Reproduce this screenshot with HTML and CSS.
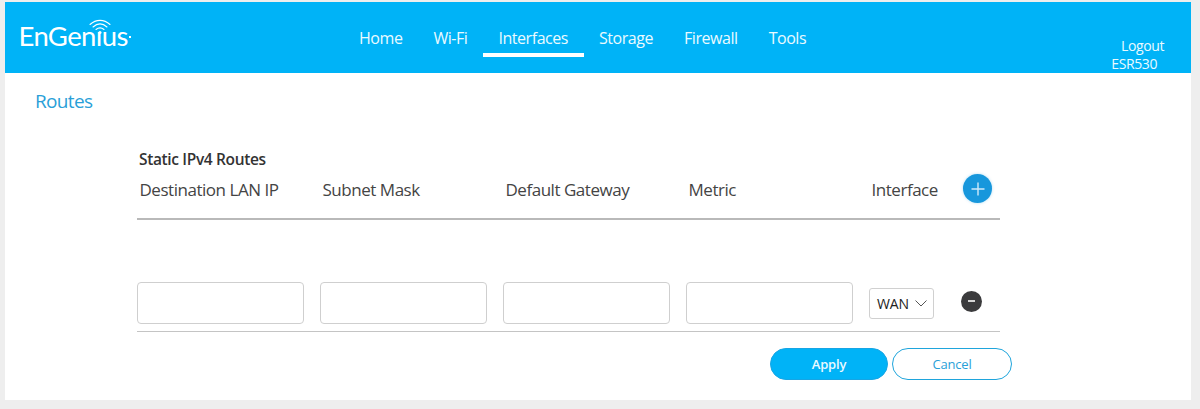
FILE: index.html
```html
<!DOCTYPE html>
<html lang="en">
<head>
<meta charset="utf-8">
<title>Routes</title>
<link rel="stylesheet" href="styles.css">
</head>
<body>
<div class="frame">
  <header class="topbar">
    <div class="logo">
      <svg class="logo-wifi" width="24" height="18" viewBox="0 0 24 18" fill="none" stroke="#fff" stroke-linecap="round">
        <path d="M2 6.500C8 1 16 1 22 6.500" stroke-width="1.100"/>
        <path d="M5 9C9.500 5 14.500 5 19 9" stroke-width="1.100"/>
        <path d="M8 11.500C10.500 9.500 13.500 9.500 16 11.500" stroke-width="1.100"/>
        <circle cx="12" cy="14.500" r="1.500" fill="#fff" stroke="none"/>
      </svg>
      <span class="logo-text">EnGenıus</span><span class="logo-dot"></span>
    </div>
    <nav class="nav">
      <a class="nav-item">Home</a>
      <a class="nav-item">Wi-Fi</a>
      <a class="nav-item active">Interfaces</a>
      <a class="nav-item">Storage</a>
      <a class="nav-item">Firewall</a>
      <a class="nav-item">Tools</a>
    </nav>
    <div class="account">
      <a class="logout">Logout</a>
      <span class="model">ESR530</span>
    </div>
  </header>
  <main class="content">
    <h1 class="page-title">Routes</h1>
    <section class="routes">
      <h2 class="section-title">Static IPv4 Routes</h2>
      <div class="grid head">
        <span class="col">Destination LAN IP</span>
        <span class="col">Subnet Mask</span>
        <span class="col">Default Gateway</span>
        <span class="col">Metric</span>
        <span class="col iface">Interface</span>
        <button class="round add" type="button" aria-label="Add">
          <svg width="14" height="14" viewBox="0 0 14 14" stroke="#cfeafa" stroke-width="1.400"><path d="M7 0.500V13.500M0.500 7H13.500"/></svg>
        </button>
      </div>
      <div class="grid row">
        <input class="field" type="text">
        <input class="field" type="text">
        <input class="field" type="text">
        <input class="field" type="text">
        <div class="select">WAN
          <svg width="12" height="7" viewBox="0 0 12 7" fill="none" stroke="#555" stroke-width="1"><path d="M0.500 0.500L6 6L11.500 0.500"/></svg>
        </div>
        <button class="round remove" type="button" aria-label="Remove"><span class="minus"></span></button>
      </div>
      <div class="actions">
        <button class="btn apply" type="button">Apply</button>
        <button class="btn cancel" type="button">Cancel</button>
      </div>
    </section>
  </main>
</div>
</body>
</html>
```
FILE: styles.css
```css
* { box-sizing: border-box; }
html, body { margin: 0; height: 100%; }
body {
  background: #eeeeee;
  font-family: "Open Sans", "Liberation Sans", sans-serif;
  overflow: hidden;
}
.frame {
  margin: 2px 9px 0 5px;
  height: 398px;
  background: #fff;
  display: flex;
  flex-direction: column;
}
.topbar {
  height: 71px;
  flex: none;
  background: #00b3f7;
  color: #eafaff;
  display: flex;
  position: relative;
}
.logo {
  position: relative;
  width: 338.500px;
  flex: none;
  padding: 16px 0 0 13.500px;
}
.logo-text {
  font-family: "Lato", sans-serif;
  font-weight: 400;
  font-size: 27.500px;
  line-height: 36px;
  color: #fff;
  letter-spacing: -0.6px;
}
.logo-wifi {
  position: absolute;
  left: 83px;
  top: 16px;
}
.logo-dot {
  display: inline-block;
  width: 2px;
  height: 2px;
  background: #fff;
  margin: 0 0 10px 1px;
  vertical-align: middle;
}
.nav {
  display: flex;
  align-items: flex-start;
  padding-top: 21px;
}
.nav-item {
  font-size: 16px;
  line-height: 30px;
  height: 34px;
  padding: 0 15.500px;
  letter-spacing: -0.45px;
  white-space: nowrap;
}
.nav-item.active { border-bottom: 4px solid #fff; }
.account {
  margin-left: auto;
  padding: 35px 27px 0 0;
  display: flex;
  flex-direction: column;
  align-items: flex-end;
  font-size: 14px;
  line-height: 18px;
  letter-spacing: -0.4px;
}
.model { margin-right: 7px; }
.content { flex: 1; padding: 0 0 0 30px; position: relative; }
.page-title {
  margin: 16px 0 0;
  font-size: 19px;
  line-height: 24px;
  font-weight: 400;
  color: #2a9fd8;
  letter-spacing: -0.65px;
}
.routes { width: 875px; margin-left: 102px; padding-top: 36px; }
.section-title {
  margin: 0 0 0 2px;
  font-size: 15.500px;
  line-height: 20px;
  font-weight: 600;
  color: #333;
  letter-spacing: -0.35px;
}
.grid {
  display: grid;
  grid-template-columns: repeat(4, 167px) 65px 1fr;
  column-gap: 16px;
  width: 863px;
}
.head {
  height: 51px;
  align-items: start;
  border-bottom: 2px solid #b9b9b9;
  padding-top: 10px;
}
.col {
  padding-left: 2.500px;
  font-size: 17px;
  line-height: 22px;
  color: #444;
  letter-spacing: -0.47px;
  white-space: nowrap;
}
.iface { white-space: nowrap; }
.round {
  border: 0;
  padding: 0;
  border-radius: 50%;
  display: flex;
  align-items: center;
  justify-content: center;
}
.add {
  width: 29px;
  height: 29px;
  background: #1797dc;
  justify-self: end;
  margin: -5px 8px 0 0;
  box-shadow: 0 0 3px rgba(23, 151, 220, .35);
}
.row {
  margin-top: 62px;
  height: 50px;
  align-items: center;
  border-bottom: 1px solid #c4c4c4;
  padding-bottom: 7px;
}
.field {
  width: 100%;
  height: 42px;
  margin: 0;
  padding: 0;
  border: 1px solid #cfcfcf;
  border-radius: 4px;
  background: #fff;
}
.select {
  width: 65px;
  height: 31px;
  border: 1px solid #d0d0d0;
  border-radius: 3px;
  display: flex;
  align-items: center;
  gap: 6px;
  padding-left: 7px;
  font-size: 14px;
  letter-spacing: -0.2px;
  color: #222;
}
.remove {
  width: 21px;
  height: 21px;
  background: #3b3b3d;
  justify-self: end;
  margin: -4px 18px 0 0;
}
.minus { width: 7px; height: 2px; background: #d5d5d5; }
.actions {
  display: flex;
  justify-content: flex-end;
  gap: 4px;
  margin-top: 16px;
}
.btn {
  height: 32px;
  border-radius: 16px;
  font-family: inherit;
  font-size: 13px;
  letter-spacing: -0.2px;
  padding: 0;
}
.apply {
  width: 118px;
  background: #00b3f7;
  border: 1px solid #17a5e4;
  color: #eafaff;
  font-weight: 600;
}
.cancel {
  width: 120px;
  background: #fff;
  border: 1px solid #1fa5dc;
  color: #2a9fd8;
}
```
